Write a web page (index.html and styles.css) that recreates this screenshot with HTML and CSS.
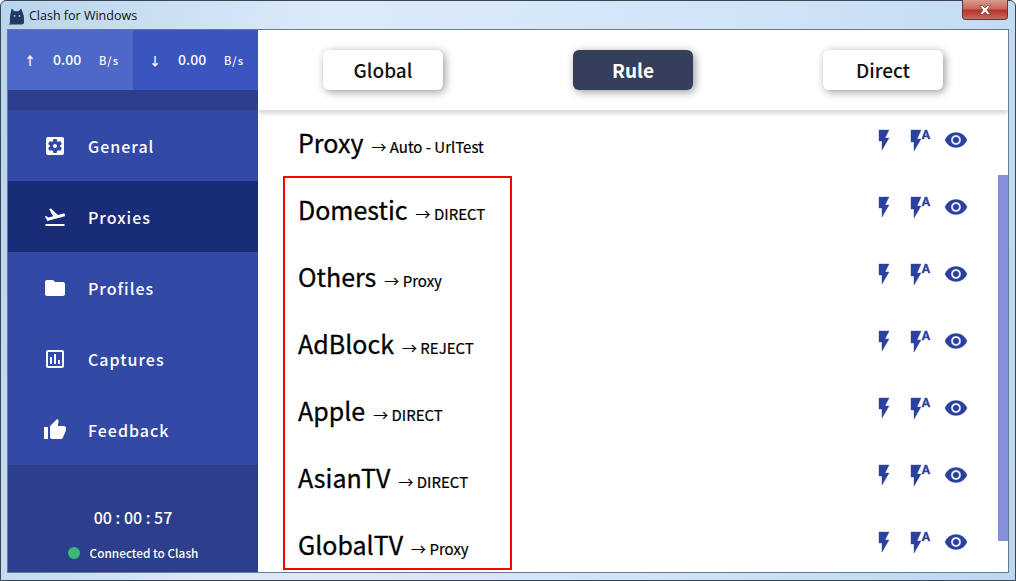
FILE: index.html
```html
<!DOCTYPE html>
<html lang="en">
<head>
    <meta charset="UTF-8">
    <meta name="viewport" content="width=device-width, initial-scale=1.0">
    <title>Clash for Windows</title>
    <link rel="stylesheet" href="styles.css">
</head>
<body>

    <div class="window">
        <!-- Window title bar -->
        <div class="titlebar">
            <svg class="cat" viewBox="0 0 16 16">
                <path fill="#1f3a63" d="M0 15.500c1.200 0 1.800-.6 1.800-2V9C2 6 3 3 3.500.5L6.200 3h3.600L12.500.5C13 3 15 6 15 9v4.500c0 1.500-1 2-2 2z"/>
                <circle cx="6.200" cy="7.500" r=".8" fill="#bcd"/>
                <circle cx="10.800" cy="7.500" r=".8" fill="#bcd"/>
            </svg>
            <span class="title">Clash for Windows</span>
            <div class="close">
                <svg viewBox="0 0 12 10" width="12" height="10">
                    <path fill="#fff" stroke="#6a3a36" stroke-width=".7" d="M.5.500h3L6 3l2.500-2.500h3L8 5l3.500 4.500h-3L6 7 3.500 9.500h-3L4 5z"/>
                </svg>
            </div>
        </div>

        <div class="client">
            <!-- Sidebar -->
            <aside class="sidebar">
                <div class="traffic">
                    <div class="traffic-cell up">
                        <span class="arrow">↑</span><span class="speed">0.00</span><span class="unit">B/s</span>
                    </div>
                    <div class="traffic-cell">
                        <span class="arrow">↓</span><span class="speed">0.00</span><span class="unit">B/s</span>
                    </div>
                </div>
                <div class="spacer"></div>
                <nav class="nav">
                    <a class="nav-item">
                        <svg viewBox="0 0 24 24"><path d="M12 10c-1.100 0-2 .9-2 2s.9 2 2 2 2-.9 2-2-.9-2-2-2zm7-7H5c-1.110 0-2 .9-2 2v14c0 1.100.89 2 2 2h14c1.110 0 2-.9 2-2V5c0-1.100-.89-2-2-2zm-1.750 9c0 .23-.02.46-.05.68l1.480 1.160c.13.11.17.3.08.45l-1.400 2.420c-.09.15-.27.21-.43.15l-1.740-.7c-.36.28-.76.51-1.180.69l-.26 1.850c-.03.17-.18.3-.35.3h-2.800c-.17 0-.32-.13-.35-.29l-.26-1.850c-.43-.18-.82-.41-1.180-.69l-1.740.7c-.16.06-.34 0-.43-.15l-1.400-2.420c-.09-.15-.05-.34.08-.45l1.480-1.160c-.03-.23-.05-.46-.05-.69 0-.23.02-.46.05-.68l-1.480-1.160c-.13-.11-.17-.3-.08-.45l1.400-2.420c.09-.15.27-.21.43-.15l1.740.7c.36-.28.76-.51 1.180-.69l.26-1.850c.03-.17.18-.3.35-.3h2.800c.17 0 .32.13.35.29l.26 1.850c.43.18.82.41 1.180.69l1.740-.7c.16-.06.34 0 .43.15l1.400 2.420c.09.15.05.34-.08.45l-1.480 1.160c.03.23.05.46.05.69z"/></svg>
                        <span>General</span>
                    </a>
                    <a class="nav-item active">
                        <svg viewBox="0 0 24 24"><path d="M2.500 19h19v2h-19zm19.570-9.360c-.21-.8-1.040-1.280-1.840-1.060L14.920 10l-6.900-6.430-1.930.51 4.140 7.170-4.970 1.330-1.970-1.540-1.450.39 1.820 3.160.77 1.330 1.600-.43 5.310-1.420 4.350-1.160L21 11.490c.81-.23 1.280-1.050 1.070-1.850z"/></svg>
                        <span>Proxies</span>
                    </a>
                    <a class="nav-item">
                        <svg viewBox="0 0 24 24"><path d="M10 4H4c-1.100 0-1.990.9-1.990 2L2 18c0 1.100.9 2 2 2h16c1.100 0 2-.9 2-2V8c0-1.100-.9-2-2-2h-8l-2-2z"/></svg>
                        <span>Profiles</span>
                    </a>
                    <a class="nav-item">
                        <svg viewBox="0 0 24 24"><path d="M19 3H5c-1.100 0-2 .9-2 2v14c0 1.100.9 2 2 2h14c1.100 0 2-.9 2-2V5c0-1.100-.9-2-2-2zm0 16H5V5h14v14zM7 10h2v7H7zm4-3h2v10h-2zm4 6h2v4h-2z"/></svg>
                        <span>Captures</span>
                    </a>
                    <a class="nav-item">
                        <svg viewBox="0 0 24 24"><path d="M1 21h4V9H1v12zm22-11c0-1.100-.9-2-2-2h-6.310l.95-4.570.03-.32c0-.41-.17-.79-.44-1.060L14.170 1 7.590 7.590C7.220 7.950 7 8.450 7 9v10c0 1.100.9 2 2 2h9c.83 0 1.540-.5 1.840-1.220l3.020-7.050c.09-.23.14-.47.14-.73v-2z"/></svg>
                        <span>Feedback</span>
                    </a>
                </nav>
                <div class="status">
                    <div class="clock">00 : 00 : 57</div>
                    <div class="connected"><span class="dot"></span>Connected to Clash</div>
                </div>
            </aside>

            <!-- Main panel -->
            <main class="main">
                <div class="modes">
                    <div class="mode-col"><button class="mode">Global</button></div>
                    <div class="mode-col"><button class="mode selected">Rule</button></div>
                    <div class="mode-col"><button class="mode">Direct</button></div>
                </div>
                <div class="groups" id="groups"></div>
                <div class="scroll-thumb"></div>
                <div class="highlight"></div>
            </main>
        </div>
    </div>

    <template id="group-row">
        <div class="group">
            <div class="group-name"><span class="name"></span><span class="target"></span></div>
            <div class="group-icons">
                <svg class="flash" viewBox="0 0 24 24"><path d="M7 2v11h3v9l7-12h-4l4-8z"/></svg>
                <svg class="flash-auto" viewBox="0 0 24 24"><path d="M3 2v12h3v9l7-12H9l4-9H3zm16 0h-2l-3.200 9h1.900l.7-2h3.200l.7 2h1.900L19 2zm-2.150 5.650L18 4l1.150 3.650h-2.300z"/></svg>
                <svg class="eye" viewBox="0 0 24 24"><path d="M12 4.500C7 4.500 2.730 7.610 1 12c1.730 4.390 6 7.500 11 7.500s9.270-3.110 11-7.500c-1.730-4.390-6-7.500-11-7.500zM12 17c-2.760 0-5-2.240-5-5s2.240-5 5-5 5 2.240 5 5-2.240 5-5 5zm0-8c-1.660 0-3 1.340-3 3s1.340 3 3 3 3-1.340 3-3-1.340-3-3-3z"/></svg>
            </div>
        </div>
    </template>

    <script>
        // Proxy groups and the node each one points at
        const groups = [
            ['Proxy', 'Auto - UrlTest'],
            ['Domestic', 'DIRECT'],
            ['Others', 'Proxy'],
            ['AdBlock', 'REJECT'],
            ['Apple', 'DIRECT'],
            ['AsianTV', 'DIRECT'],
            ['GlobalTV', 'Proxy']
        ];
        let list = document.getElementById('groups');
        let tpl = document.getElementById('group-row');
        groups.forEach(g => {
            let row = tpl.content.cloneNode(true);
            row.querySelector('.name').textContent = g[0];
            row.querySelector('.target').textContent = '→ ' + g[1];
            list.appendChild(row);
        });
    </script>

</body>
</html>
```

FILE: styles.css
```css
/* General Styles */
html, body {
    height: 100%;
}

body {
    margin: 0;
    padding: 0;
    overflow: hidden;
    background-color: #fff;
    font-family: "Noto Sans CJK SC", "Noto Sans", sans-serif;
}

.window {
    box-sizing: border-box;
    height: 581px;
    width: 1016px;
    display: flex;
    flex-direction: column;
    padding: 0 8px 8px;
    border: 1px solid #3c4650;
    border-radius: 6px 6px 0 0;
    background: linear-gradient(100deg, #b9d4ee 0%, #dcebfa 30%, #cfe3f7 70%, #bcd7f2 100%);
    margin: 0;
}

/* Title bar */
.titlebar {
    flex: none;
    height: 29px;
    display: flex;
    align-items: center;
    position: relative;
    margin-left: -1px;
}

.cat {
    width: 17px;
    height: 17px;
    margin-left: 0;
    margin-top: 1px;
}

.title {
    margin-left: 4px;
    font-family: "Open Sans", sans-serif;
    font-size: 12.500px;
    color: #111;
}

.close {
    position: absolute;
    right: -1px;
    top: -1px;
    width: 46px;
    height: 20px;
    display: flex;
    align-items: center;
    justify-content: center;
    box-sizing: border-box;
    border: 1px solid #5e3a38;
    border-top: none;
    border-radius: 0 0 4px 4px;
    background: linear-gradient(#d99a90 0%, #c8685c 45%, #b5352a 55%, #c96a5e 100%);
}

.client {
    flex: 1;
    display: flex;
    margin: 0 -1px 0 -1px;
    outline: 1px solid #6b7a8a;
    min-height: 0;
}

/* Sidebar */
.sidebar {
    flex: none;
    width: 250px;
    display: flex;
    flex-direction: column;
    background-color: #2c3e8c;
    color: #fff;
}

.traffic {
    display: flex;
    height: 60px;
    background-color: #3a55bf;
}

.traffic-cell {
    width: 125px;
    display: flex;
    align-items: center;
    box-sizing: border-box;
    padding-left: 16px;
}

.traffic-cell.up {
    background-color: #4e68c7;
}

.arrow {
    width: 29px;
    font-size: 12px;
    font-weight: 700;
    text-align: left;
}

.speed {
    width: 46px;
    font-size: 14px;
    font-weight: 500;
    margin-top: -2px;
}

.unit {
    font-size: 11px;
    font-weight: 500;
    letter-spacing: 1px;
}

.spacer {
    height: 20px;
}

.nav {
    background-color: #3249a5;
}

.nav-item {
    height: 71px;
    display: flex;
    align-items: center;
    padding-left: 35px;
    font-size: 16px;
    font-weight: 500;
    letter-spacing: 1px;
}

.nav-item svg {
    width: 24px;
    height: 24px;
    fill: #fff;
    margin-right: 21px;
}

.nav-item.active {
    background-color: #192c78;
}

.status {
    flex: 1;
    text-align: center;
}

.clock {
    margin-top: 40px;
    font-size: 16px;
    font-weight: 500;
    line-height: 24px;
}

.connected {
    margin-top: 14px;
    display: flex;
    align-items: center;
    justify-content: center;
    font-size: 11.800px;
    font-weight: 500;
    line-height: 20px;
}

.dot {
    width: 12px;
    height: 12px;
    border-radius: 50%;
    background-color: #3cb878;
    margin-right: 10px;
}

/* Main panel */
.main {
    flex: 1;
    position: relative;
    background-color: #fff;
    overflow: hidden;
}

.modes {
    height: 80px;
    display: flex;
    align-items: center;
    box-shadow: 0 3px 5px rgba(0, 0, 0, 0.18);
    position: relative;
}

.mode-col {
    flex: 1;
    display: flex;
    justify-content: center;
}

.mode {
    width: 120px;
    height: 40px;
    padding: 0 0 2px;
    border: none;
    border-radius: 6px;
    background-color: #fff;
    color: #111;
    font-family: inherit;
    font-size: 19px;
    font-weight: 500;
    box-shadow: 2px 2px 8px rgba(0, 0, 0, 0.4);
}

.mode.selected {
    background-color: #353f5c;
    color: #fff;
    font-weight: 700;
}

.group {
    height: 67px;
    display: flex;
    justify-content: space-between;
    align-items: center;
    padding-left: 40px;
    padding-right: 40px;
}

.group-name {
    color: #000;
    margin-top: -4px;
}

.name {
    font-size: 25px;
    font-weight: 400;
    -webkit-text-stroke: 0.3px #000;
}

.target {
    font-size: 15px;
    font-weight: 400;
    margin-left: 8px;
    -webkit-text-stroke: 0.2px #000;
}

.group-icons {
    display: flex;
    align-items: center;
    margin-top: -8px;
}

.group-icons svg {
    fill: #2a41a0;
    stroke: #2a41a0;
    stroke-width: 0.4;
    width: 24px;
    height: 24px;
}

.flash {
    margin-left: 1px;
}

.flash-auto {
    margin-left: 12px;
}

.eye {
    margin-left: 12px;
}

.scroll-thumb {
    position: absolute;
    right: 0;
    top: 145px;
    width: 10px;
    height: 366px;
    background-color: #8490d8;
}

/* Red annotation box */
.highlight {
    position: absolute;
    left: 25px;
    top: 146px;
    width: 225px;
    height: 390px;
    border: 2px solid #f00;
}
```
